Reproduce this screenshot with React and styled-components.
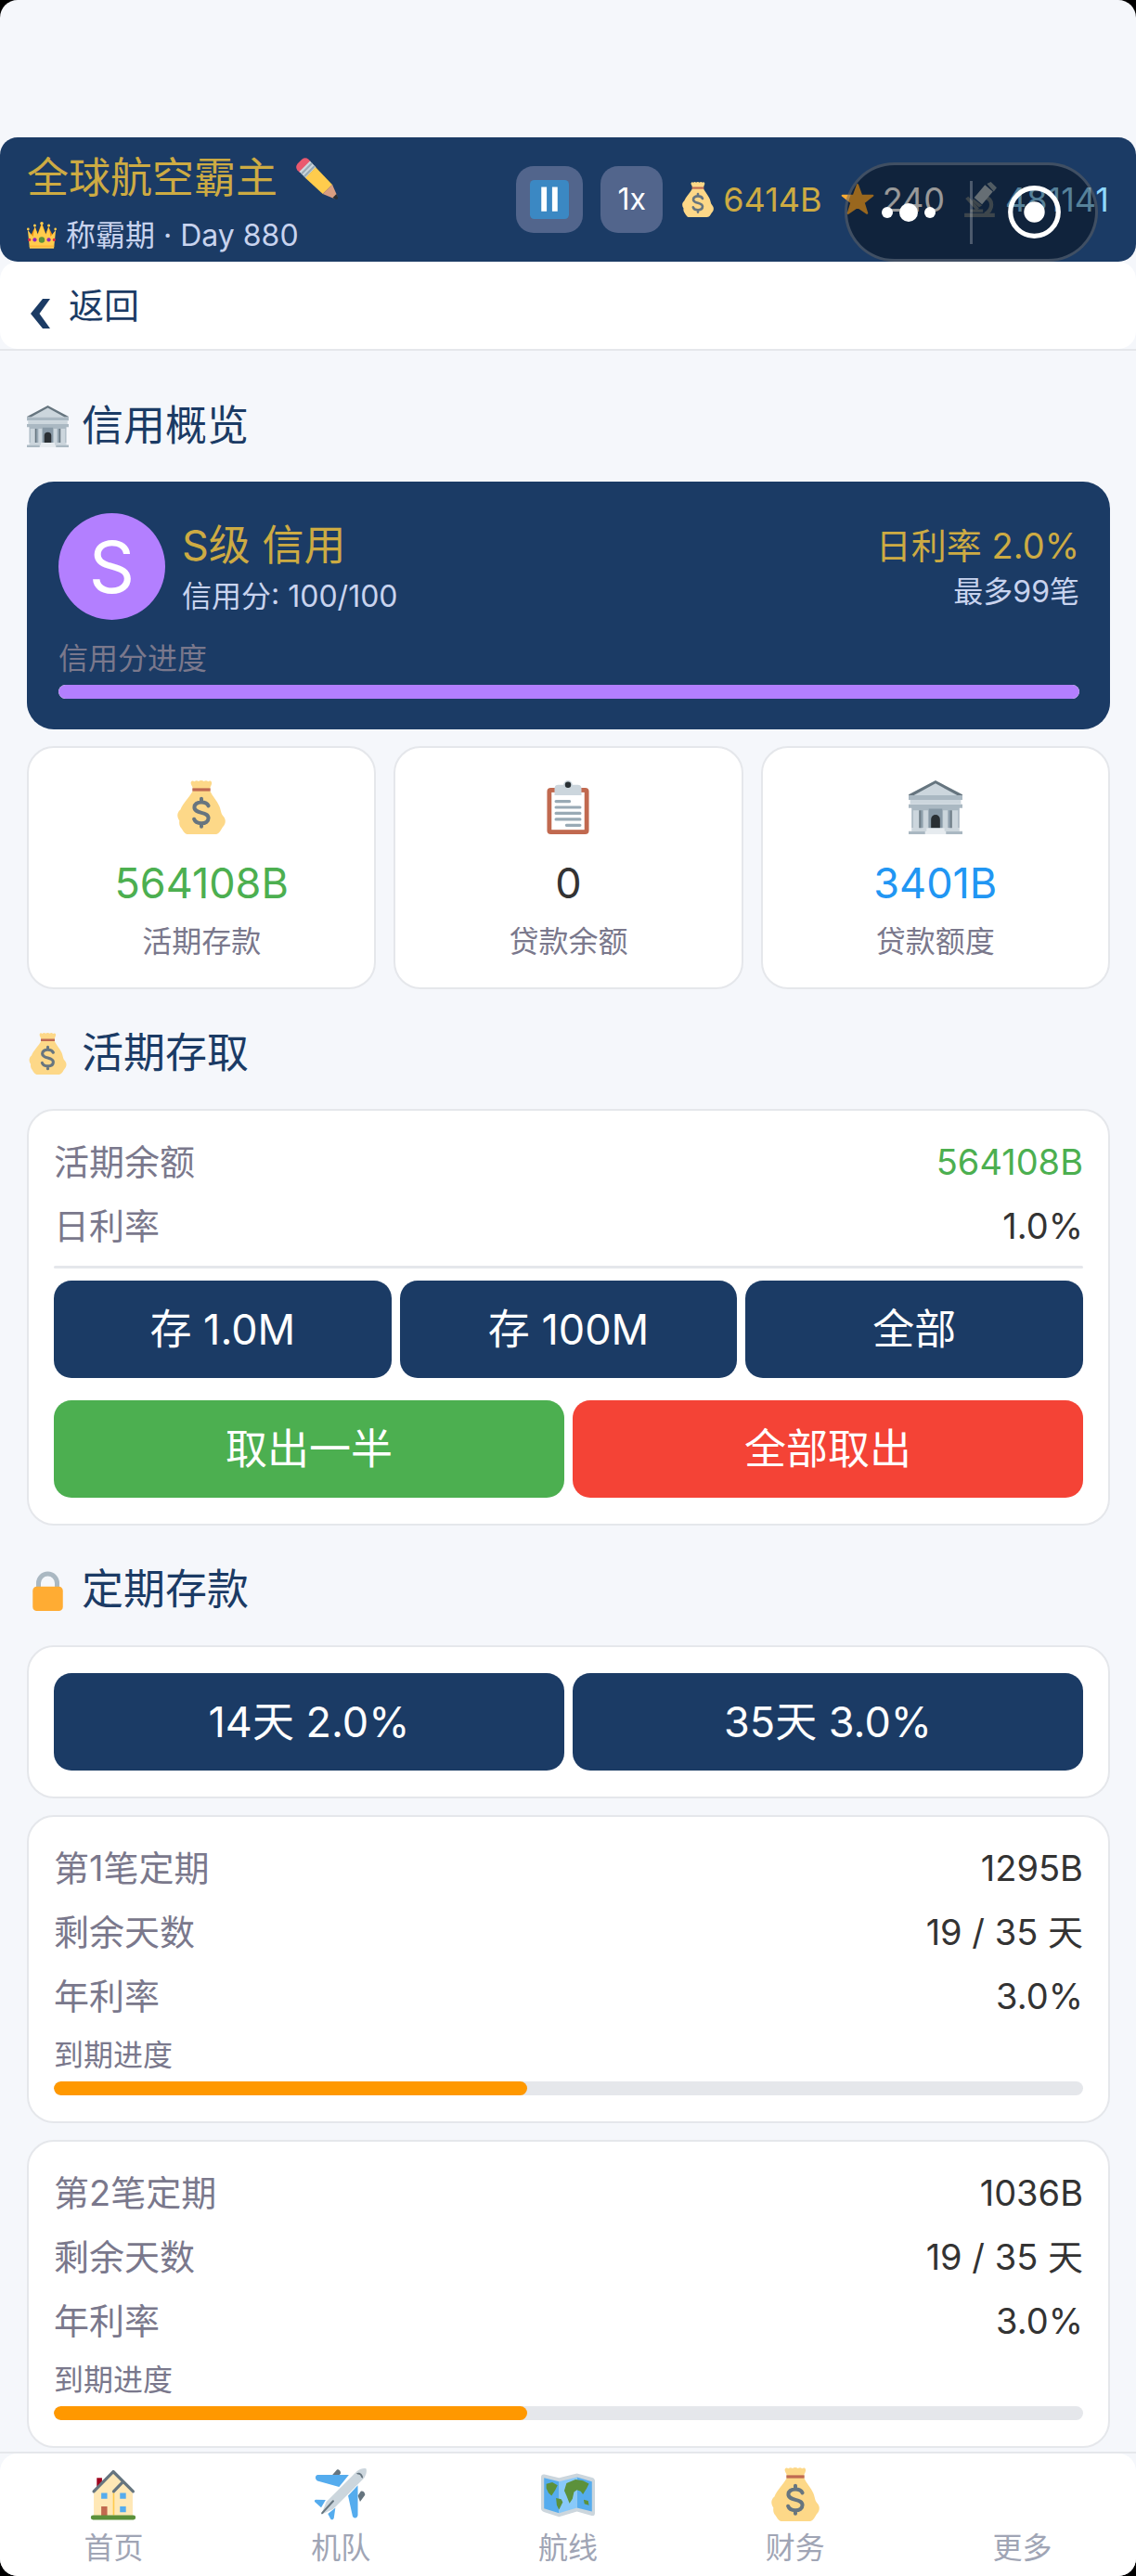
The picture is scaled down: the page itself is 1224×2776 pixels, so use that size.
import React from "react";
import styled, { createGlobalStyle } from "styled-components";

const color = {
  page: "#f5f7fb",
  navy: "#1b3b65",
  gold: "#cdab43",
  line: "#e5e7eb",
  muted: "#7a788c",
  ink: "#333333",
  pale: "#c8d3ee",
  purple: "#b37fff",
  green: "#4caf50",
  red: "#f44336",
  orange: "#ff9800",
  blue: "#2196f3",
};

const Global = createGlobalStyle`
  *, *::before, *::after { box-sizing: border-box; }
  body {
    margin: 0;
    background: #000;
    font-family: Inter, "Noto Sans CJK SC", sans-serif;
    font-size: 38px;
    line-height: 54px;
    color: ${color.ink};
  }
  h1, h2, p, dl, dd { margin: 0; font-weight: 400; }
  button { font: inherit; color: inherit; border: 0; padding: 0; background: none; cursor: pointer; }
  a { color: inherit; text-decoration: none; }
`;

const App = styled.div`
  display: flex;
  flex-direction: column;
  min-height: 100vh;
  padding-top: 148px;
  background: ${color.page};
  border-radius: 19px;
  overflow: hidden;
`;

/* ---------- icons ---------- */

const Svg = styled.svg`
  display: block;
  flex: none;
  width: ${(p) => p.$size}px;
  height: ${(p) => p.$size}px;
`;

const Icon = ({ size, children }) => (
  <Svg $size={size} viewBox="0 0 36 36" aria-hidden="true">
    {children}
  </Svg>
);

const MoneyBag = ({ size }) => (
  <Icon size={size}>
    <path
      fill="#FDD888"
      d="M11 1.2c.6-1.400 1.800-.9 2.300-.4.9-.9 2-.9 2.800-.2 1-.8 2.500-.8 3.600 0 .9-.7 2-.7 2.800.2.7-.6 1.900-.8 2.300.4.5 1.300-.8 2.600-1 4v2c1.500 3.300 4.700 6.600 6.200 10 .8 1.900 1 3.700 1.600 5.300.8 1.500 2.400 2.500 2.400 4.700 0 2.500-1.200 3.300-2.200 4.700-1 1.600-2 4.100-4.800 4.100H9.300c-2.600 0-3.600-2.500-4.700-4.100-1.200-1.400-1.600-3-1.300-4.900-1.700-2.400-1.900-5.500.7-7.500C5.500 15.500 10 11.400 12.200 7.200v-2c-.2-1.400-1.700-2.700-1.200-4z"
    />
    <path fill="#BF6952" d="M12 5.200h12v2H12z" />
    <path
      fill="none"
      stroke="#67757F"
      strokeWidth="2.500"
      strokeLinecap="round"
      d="M18 12.300v2.200M18 28.700v2.200M22.700 17c-.7-1.600-2.400-2.400-4.700-2.400-2.800 0-4.700 1.300-4.700 3.400 0 4.700 9.400 2.600 9.400 7.200 0 2.200-1.900 3.500-4.700 3.500-2.500 0-4.300-1-4.900-2.800"
    />
  </Icon>
);

const Bank = ({ size }) => (
  <Icon size={size}>
    <path fill="#CCD6DD" d="M18 .8 2 10h32z" />
    <path fill="#66757F" d="M18 0 0 9.500V10h3.500L18 2l14.500 8H36v-.5z" />
    <path fill="#AAB8C2" d="M0 10h36v3H0zM0 16h36v2.500H0zM2 18.500h32V32H2z" />
    <path fill="#CCD6DD" d="M1 13h34v3H1zM3 20h5v12H3zM10 20h3v12h-3zM23 20h3v12h-3zM28 20h5v12h-5z" />
    <path fill="#8899A6" d="M13.500 19h9v13h-9zM8 20h1.200v12H8zM26.800 20H28v12h-1.200z" />
    <path fill="#66757F" d="M7 20h1v12H7zM28 20h1v12h-1z" />
    <path fill="#292F33" d="M15 32v-6a3 3 0 0 1 6 0v6z" />
    <path fill="#CCD6DD" d="M2 32h32v2H2z" />
    <path fill="#AAB8C2" d="M0 34h36v2H0z" />
    <path fill="#E6EBEF" d="M12 32h12v2H12zM11 34h14v2H11z" />
  </Icon>
);

const Clipboard = ({ size }) => (
  <Icon size={size}>
    <rect x="4" y="5" width="28" height="31" rx="2.500" fill="#C1694F" />
    <rect x="7" y="8" width="22" height="25" fill="#fff" />
    <path fill="#CCD6DD" d="M9 10V5.500A2.500 2.500 0 0 1 11.500 3H15a3 3 0 0 1 6 0h3.500A2.500 2.500 0 0 1 27 5.500V10z" />
    <ellipse cx="18" cy="3" rx="2" ry="2" fill="#292F33" />
    <path
      stroke="#99AAB5"
      strokeWidth="2"
      strokeLinecap="round"
      d="M10 14h9M10 18h16M10 22h16M10 26h16M17 30h9"
    />
  </Icon>
);

const Lock = ({ size }) => (
  <Icon size={size}>
    <path fill="none" stroke="#AAB8C2" strokeWidth="4" d="M10 17v-5a8 8 0 0 1 16 0v5" />
    <rect x="5" y="15" width="26" height="21" rx="3.500" fill="#FFAC33" />
  </Icon>
);

const Pencil = ({ size }) => (
  <Icon size={size}>
    <path fill="#EA596E" d="M1 10.500C-.5 8.500 0 6.500 1.800 4.500L5 1.300C7-.3 9-.2 10.500 1.200l2 2-9.300 9.500z" />
    <path fill="#CCD6DD" d="m2.800 12 9.200-9.300 5.200 5.500L8.300 17.500z" />
    <path fill="#99AAB5" d="m4 13.300 9.200-9.400 1.200 1.200L5.200 14.500zM6.300 15.600l9.200-9.300 1.200 1.200-9.100 9.400z" />
    <path fill="#FFCC4D" d="m8 17.300 8.900-9.200 14.300 15-8.200 8z" />
    <path fill="#D99E82" d="M23 31.100 31.200 23 35.500 33l-2.300 2.400z" />
    <path fill="#292F33" d="m31.500 34.500 3.300-3.300 1.200 3c.3 1-.5 1.900-1.600 1.600z" />
  </Icon>
);

const Crown = ({ size }) => (
  <Icon size={size}>
    <path fill="#F4900C" d="m4 19 6-12 3 9 5-14 5 14 3-9 6 12z" />
    <path
      fill="#FFCC4D"
      d="M1 11 3.300 33.500h29.400L35 11l-6.300 8-2.200-12-3.700 9.500L18 4l-4.800 12.500L9.500 7 7.300 19z"
    />
    <g fill="#FFCC4D">
      <circle cx="1.500" cy="10" r="1.500" />
      <circle cx="9.500" cy="5.500" r="1.700" />
      <circle cx="18" cy="3" r="2" />
      <circle cx="26.500" cy="5.500" r="1.700" />
      <circle cx="34.500" cy="10" r="1.500" />
    </g>
    <path fill="#FFAC33" d="M3 30h30v1.200H3z" />
    <circle cx="18" cy="23" r="3.600" fill="#5C913B" />
    <circle cx="9.500" cy="23" r="2.400" fill="#9026B9" />
    <circle cx="26.500" cy="23" r="2.400" fill="#9026B9" />
    <circle cx="3" cy="23" r="1.800" fill="#DD2E44" />
    <circle cx="33" cy="23" r="1.800" fill="#DD2E44" />
  </Icon>
);

const Pause = ({ size }) => (
  <Icon size={size}>
    <rect width="36" height="36" rx="4" fill="#3B88C3" />
    <path fill="#fff" d="M10.500 6.500h5v22.500h-5zM20.500 6.500h5v22.500h-5z" />
  </Icon>
);

const Star = ({ size }) => (
  <Icon size={size}>
    <path
      fill="#FFAC33"
      stroke="#FFAC33"
      strokeWidth="2"
      strokeLinejoin="round"
      d="m18 3 4 11h11.500l-9.200 7.200L27.700 32 18 25.500 8.300 32l3.400-10.800L2.500 14H14z"
    />
  </Icon>
);

const Microscope = ({ size }) => (
  <Icon size={size}>
    <path fill="#66757F" d="M2 32h31v4H2zM8 28h13v3H8zM3 17l3-2 11 12-3 2z" />
    <path fill="none" stroke="#66757F" strokeWidth="4" d="M24 16c7 2 8 12-1 17" />
    <path fill="#AAB8C2" d="m12 16 11-13 8 7-11 13z" />
    <path fill="#8899A6" d="m25 2 4-2 6 6-3 4z" />
    <path fill="#66757F" d="m11 17 9 7-3 2-7-6z" />
  </Icon>
);

const House = ({ size }) => (
  <Icon size={size}>
    <rect x="7" y="7" width="3.500" height="9" fill="#A0041E" />
    <path fill="#FFE8B6" d="M5 15.500 18 3l13 12.500V33H5z" />
    <path fill="#FFCC4D" d="M17.800 17h1v15h-1z" />
    <path
      fill="none"
      stroke="#66757F"
      strokeWidth="2"
      strokeLinecap="round"
      strokeLinejoin="round"
      d="m5 16 13-13.200L31.300 16M18.300 16l6-6.200"
    />
    <path fill="#55ACEE" d="M10 17h4v4h-4zM22.500 17h4v4h-4zM22.500 26h4v4h-4z" />
    <path fill="#C1694F" d="M10 26h4v6.500h-4z" />
    <rect x="3" y="32" width="30" height="3" rx="1.500" fill="#5C913B" />
  </Icon>
);

const Plane = ({ size }) => (
  <Icon size={size}>
    <path fill="#66757F" d="m12.500 5 3-3.500c1-.5 3 1 2.500 2.500L16 6.500zM29.500 19l2-3c1.500-.5 3 1 2.800 2.500L31 23z" />
    <path
      fill="#55ACEE"
      d="M2.500 5h21l-6.500 8L2.500 9C.8 8 .8 5.500 2.500 5zM23 19l6.500-7v20c-.3 2.200-2.800 2.400-3.500.6zM1.500 21.500 8 21.800l-3 5-4-3.500c-.8-.8-.4-1.700.5-1.800zM9.500 31l5-4-1 6.800c-.3 1.200-1.500 1.500-2.200.6z"
    />
    <path fill="#CCD6DD" d="M29 2.500C31 .8 33.500.2 35 .8c.8 1.500 0 4.500-1.500 6.500L13 28l-8 3.500L8.500 23z" />
    <path fill="none" stroke="#66757F" strokeWidth="1.300" strokeLinecap="round" d="m13 22.500-7.300 8" />
    <path fill="#66757F" d="M28.500 4c2-1.400 4.800.6 4.400 3.300l-1.200-.8c-.2-1.200-1-1.900-2.200-1.800z" />
  </Icon>
);

const WorldMap = ({ size }) => (
  <Icon size={size}>
    <path fill="#CCD6DD" d="M0 6.500C0 5 1 4.300 2.300 4.700L12 7l12-3 10.300 2.800C35.500 7.200 36 8 36 9v21.500c0 1.500-1 2-2.200 1.700L24 29.500 12 33 2.300 30C.7 29.400 0 28.500 0 27.500z" />
    <path fill="#55ACEE" d="M2 7l10 2.500v21L2 27.500zM24 6.500 34 9.500v20l-10-2.500z" />
    <path fill="#88C9F9" d="m12 9.500 12-3V27l-12 3.500z" />
    <path
      fill="#5C913B"
      d="m3.500 11 4-1 3.500 2-1.500 3-2.500 4-2-2-1.500-3zM10 20.500l3.500.8 1 2-2.500 5-1.500-3zM17 10.500l6-2.500 5 .8 4 2-1.500 3.200-2.500 4-1.500-2-2.500-1-2 1.500-1 4.500-2 3-2-5-1.500-3.500zM28.500 21.500l3 .8.5 3-3-1z"
    />
  </Icon>
);

/* ---------- header ---------- */

const Header = styled.header`
  position: relative;
  display: flex;
  align-items: center;
  justify-content: space-between;
  height: 134px;
  padding: 0 29px;
  background: ${color.navy};
  border-radius: 19px;
`;

const Company = styled.div`
  display: flex;
  flex-direction: column;
  gap: 14px;
  padding-top: 10px;
`;

const CompanyName = styled.h1`
  display: flex;
  align-items: center;
  gap: 20px;
  font-size: 45px;
  line-height: 54px;
  color: ${color.gold};
`;

const Stage = styled.p`
  display: flex;
  align-items: center;
  gap: 10px;
  font-size: 32px;
  line-height: 42px;
  color: ${color.pale};
`;

const Status = styled.div`
  display: flex;
  align-items: center;
  gap: 19px;
`;

const SpeedButton = styled.button`
  display: flex;
  align-items: center;
  justify-content: center;
  height: 72px;
  padding: 0 15px;
  font-size: 32px;
  color: #fff;
  background: #52658c;
  border-radius: 19px;
  min-width: 67px;
`;

const Resource = styled.span`
  display: flex;
  align-items: center;
  gap: 8px;
  font-size: 36px;
  color: ${(p) => p.$color};
`;

const Capsule = styled.div`
  position: absolute;
  right: 41px;
  bottom: 0;
  display: flex;
  align-items: center;
  width: 273px;
  height: 107px;
  background: rgba(0, 0, 0, 0.4);
  border: 3px solid rgba(255, 255, 255, 0.2);
  border-radius: 54px;
`;

const CapsuleButton = styled.button`
  display: flex;
  flex: 1;
  align-items: center;
  justify-content: center;
  height: 100%;
`;

const CapsuleLine = styled.span`
  width: 3px;
  height: 68px;
  background: rgba(255, 255, 255, 0.25);
`;

const BackBar = styled.div`
  border-bottom: 2px solid ${color.line};
`;

const BackLink = styled.a`
  display: flex;
  align-items: center;
  gap: 20px;
  height: 94px;
  padding: 0 33px;
  color: ${color.navy};
  background: #fff;
  border-radius: 19px;
`;

const Chevron = styled.svg`
  width: 21px;
  height: 32px;
  margin-top: 18px;
`;

/* ---------- content ---------- */

const Main = styled.main`
  display: flex;
  flex: 1;
  flex-direction: column;
  gap: 39px;
  padding: 51px 28px 2px 29px;
`;

const Section = styled.section`
  display: flex;
  flex-direction: column;
  gap: 18px;
`;

const SectionTitle = styled.h2`
  display: flex;
  align-items: center;
  gap: 14px;
  margin-bottom: 12px;
  font-size: 45px;
  line-height: 60px;
  color: ${color.navy};
`;

const CreditCard = styled.div`
  padding: 34px 33px 33px 34px;
  background: ${color.navy};
  border-radius: 29px;
`;

const CreditRow = styled.div`
  display: flex;
  align-items: center;
  gap: 18px;
`;

const Grade = styled.span`
  display: flex;
  align-items: center;
  justify-content: center;
  width: 115px;
  height: 115px;
  font-size: 77px;
  color: #fff;
  background: ${color.purple};
  border-radius: 50%;
`;

const CreditText = styled.div`
  display: flex;
  flex-direction: column;
  gap: 4px;
  margin-left: ${(p) => (p.$end ? "auto" : 0)};
  text-align: ${(p) => (p.$end ? "right" : "left")};
`;

const CreditMain = styled.p`
  font-size: ${(p) => (p.$large ? 45 : 38)}px;
  line-height: ${(p) => (p.$large ? 60 : 50)}px;
  color: ${color.gold};
`;

const CreditSub = styled.p`
  font-size: 32px;
  line-height: 42px;
  color: ${color.pale};
`;

const ProgressLabel = styled.p`
  margin-top: ${(p) => (p.$tight ? 16 : 21)}px;
  font-size: 32px;
  line-height: 42px;
  color: ${color.muted};
`;

const Track = styled.div`
  height: 15px;
  margin-top: 7px;
  background: ${color.line};
  border-radius: 8px;
  overflow: hidden;
`;

const Fill = styled.div`
  height: 100%;
  background: ${(p) => p.$color};
  border-radius: 8px;
`;

const Progress = ({ label, value, fill, tight }) => (
  <>
    <ProgressLabel $tight={tight}>{label}</ProgressLabel>
    <Track role="progressbar" aria-label={label} aria-valuenow={value} aria-valuemin={0} aria-valuemax={100}>
      <Fill $color={fill} style={{ width: `${value}%` }} />
    </Track>
  </>
);

const Stats = styled.div`
  display: grid;
  grid-template-columns: repeat(3, 1fr);
  gap: 19px;
`;

const Card = styled.div`
  padding: 28px 27px;
  background: #fff;
  border: 2px solid ${color.line};
  border-radius: 29px;
`;

const StatCard = styled(Card)`
  display: flex;
  flex-direction: column;
  align-items: center;
  gap: 12px;
`;

const StatIcon = styled.span`
  padding: 7px 0 11px;
`;

const StatValue = styled.p`
  font-size: 45px;
  line-height: 60px;
  color: ${(p) => p.$color};
`;

const StatLabel = styled.p`
  font-size: 32px;
  line-height: 42px;
  color: ${color.muted};
`;

const Rows = styled.dl`
  display: flex;
  flex-direction: column;
  gap: 15px;
`;

const RowItem = styled.div`
  display: flex;
  justify-content: space-between;
`;

const Term = styled.dt`
  color: ${color.muted};
`;

const Value = styled.dd`
  color: ${(p) => p.$color || color.ink};
`;

const Row = ({ label, value, tint }) => (
  <RowItem>
    <Term>{label}</Term>
    <Value $color={tint}>{value}</Value>
  </RowItem>
);

const Divider = styled.hr`
  height: 3px;
  margin: 16px 0 13px;
  background: ${color.line};
  border: 0;
  border-radius: 2px;
`;

const Actions = styled.div`
  display: flex;
  gap: 9px;

  & + & {
    margin-top: 24px;
  }
`;

const ActionButton = styled.button`
  flex: 1 1 0;
  height: 105px;
  font-size: 45px;
  color: #fff;
  background: ${(p) => p.$color || color.navy};
  border-radius: 19px;
`;

/* ---------- bottom navigation ---------- */

const NavBar = styled.nav`
  border-top: 2px solid ${color.line};
`;

const NavList = styled.div`
  display: grid;
  grid-template-columns: repeat(5, 1fr);
  height: 132px;
  background: #fff;
  border-radius: 19px 19px 0 0;
`;

const NavItem = styled.a`
  display: flex;
  flex-direction: column;
  align-items: center;
  justify-content: flex-end;
  gap: 8px;
  padding-bottom: 9px;
  font-size: 32px;
  line-height: 42px;
  color: #a0a5b5;
`;

const stats = [
  { icon: MoneyBag, value: "564108B", label: "活期存款", tint: color.green },
  { icon: Clipboard, value: "0", label: "贷款余额", tint: color.ink },
  { icon: Bank, value: "3401B", label: "贷款额度", tint: color.blue },
];

const deposits = [
  { name: "第1笔定期", amount: "1295B" },
  { name: "第2笔定期", amount: "1036B" },
];

const navItems = [
  { label: "首页", icon: House },
  { label: "机队", icon: Plane },
  { label: "航线", icon: WorldMap },
  { label: "财务", icon: MoneyBag },
  { label: "更多" },
];

export default function BankPage() {
  return (
    <>
      <Global />
      <App>
        <Header>
          <Company>
            <CompanyName>
              全球航空霸主
              <button aria-label="改名">
                <Pencil size={45} />
              </button>
            </CompanyName>
            <Stage>
              <Crown size={32} />
              <span>称霸期 · Day 880</span>
            </Stage>
          </Company>
          <Status>
            <SpeedButton aria-label="暂停">
              <Pause size={42} />
            </SpeedButton>
            <SpeedButton>1x</SpeedButton>
            <Resource $color={color.gold}>
              <MoneyBag size={38} />
              6414B
            </Resource>
            <Resource $color="#ffffff">
              <Star size={38} />
              240
            </Resource>
            <Resource $color="#8fd8ff">
              <Microscope size={38} />
              481141
            </Resource>
          </Status>
          <Capsule>
            <CapsuleButton aria-label="菜单">
              <svg width="58" height="20" viewBox="0 0 58 20" fill="#fff" aria-hidden="true">
                <circle cx="6" cy="10" r="6" />
                <circle cx="29" cy="10" r="10" />
                <circle cx="52" cy="10" r="6" />
              </svg>
            </CapsuleButton>
            <CapsuleLine />
            <CapsuleButton aria-label="关闭">
              <svg width="57" height="57" viewBox="0 0 57 57" aria-hidden="true">
                <circle cx="28.500" cy="28.500" r="25.800" fill="none" stroke="#fff" strokeWidth="5.200" />
                <circle cx="28.500" cy="28.500" r="11.200" fill="#fff" />
              </svg>
            </CapsuleButton>
          </Capsule>
        </Header>

        <BackBar>
          <BackLink href="#back">
            <Chevron viewBox="0 0 21 32" aria-hidden="true">
              <path fill={color.navy} d="M13 0h8L9.500 16 21 32h-8L0 16z" />
            </Chevron>
            返回
          </BackLink>
        </BackBar>

        <Main>
          <Section>
            <SectionTitle>
              <Bank size={45} />
              信用概览
            </SectionTitle>
            <CreditCard>
              <CreditRow>
                <Grade>S</Grade>
                <CreditText>
                  <CreditMain $large>S级 信用</CreditMain>
                  <CreditSub>信用分: 100/100</CreditSub>
                </CreditText>
                <CreditText $end>
                  <CreditMain>日利率 2.0%</CreditMain>
                  <CreditSub>最多99笔</CreditSub>
                </CreditText>
              </CreditRow>
              <Progress label="信用分进度" value={100} fill={color.purple} />
            </CreditCard>
            <Stats>
              {stats.map(({ icon: StatGlyph, value, label, tint }) => (
                <StatCard key={label}>
                  <StatIcon>
                    <StatGlyph size={58} />
                  </StatIcon>
                  <StatValue $color={tint}>{value}</StatValue>
                  <StatLabel>{label}</StatLabel>
                </StatCard>
              ))}
            </Stats>
          </Section>

          <Section>
            <SectionTitle>
              <MoneyBag size={45} />
              活期存取
            </SectionTitle>
            <Card>
              <Rows>
                <Row label="活期余额" value="564108B" tint={color.green} />
                <Row label="日利率" value="1.0%" />
              </Rows>
              <Divider />
              <Actions>
                <ActionButton>存 1.0M</ActionButton>
                <ActionButton>存 100M</ActionButton>
                <ActionButton>全部</ActionButton>
              </Actions>
              <Actions>
                <ActionButton $color={color.green}>取出一半</ActionButton>
                <ActionButton $color={color.red}>全部取出</ActionButton>
              </Actions>
            </Card>
          </Section>

          <Section>
            <SectionTitle>
              <Lock size={45} />
              定期存款
            </SectionTitle>
            <Card>
              <Actions>
                <ActionButton>14天 2.0%</ActionButton>
                <ActionButton>35天 3.0%</ActionButton>
              </Actions>
            </Card>
            {deposits.map(({ name, amount }) => (
              <Card key={name}>
                <Rows>
                  <Row label={name} value={amount} />
                  <Row label="剩余天数" value="19 / 35 天" />
                  <Row label="年利率" value="3.0%" />
                </Rows>
                <Progress label="到期进度" value={46} fill={color.orange} tight />
              </Card>
            ))}
          </Section>
        </Main>

        <NavBar>
          <NavList>
            {navItems.map(({ label, icon: NavGlyph }) => (
              <NavItem key={label} href={`#${label}`}>
                {NavGlyph && <NavGlyph size={58} />}
                {label}
              </NavItem>
            ))}
          </NavList>
        </NavBar>
      </App>
    </>
  );
}
